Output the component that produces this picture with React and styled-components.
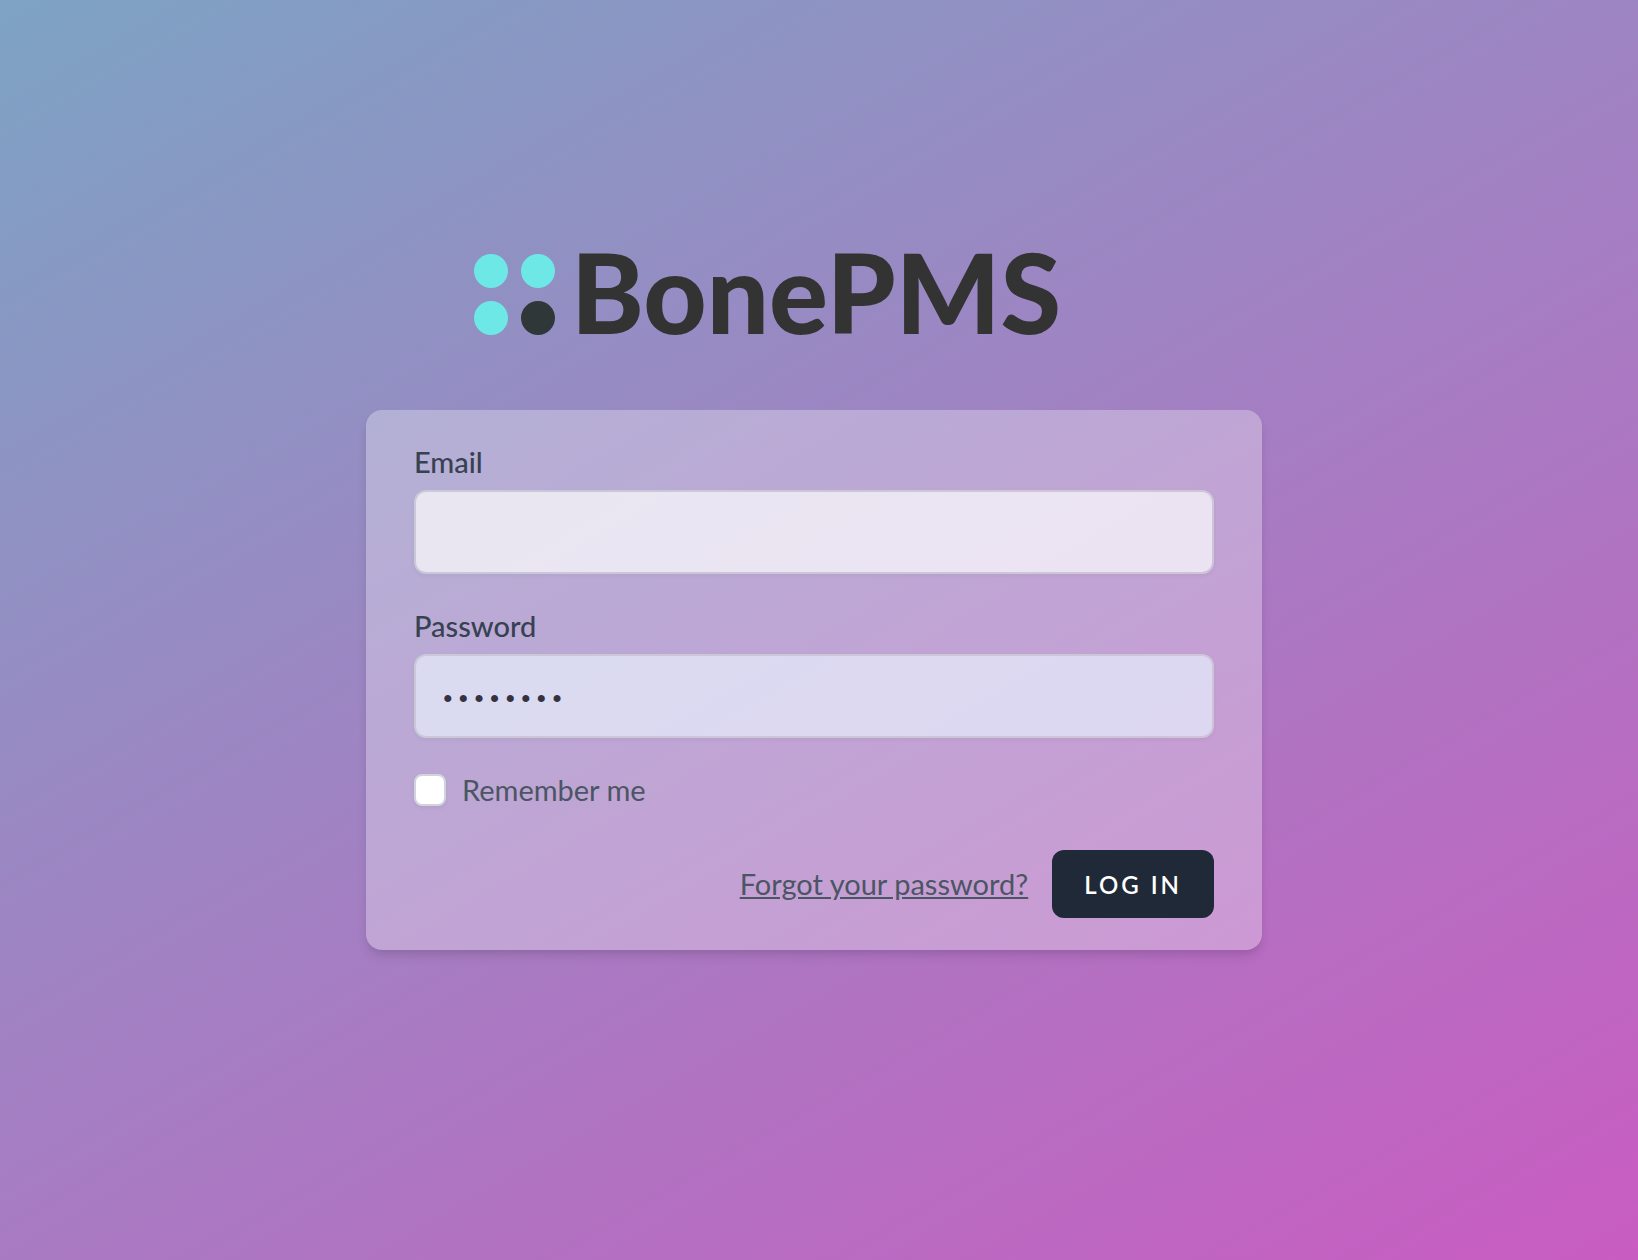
import React, { useState } from 'react';
import styled, { createGlobalStyle } from 'styled-components';

const GlobalStyle = createGlobalStyle`
    *,
    *::before,
    *::after {
        box-sizing: border-box;
    }

    body {
        margin: 0;
        font-family: Lato, 'Liberation Sans', sans-serif;
    }
`;

const Page = styled.main`
    display: flex;
    flex-direction: column;
    align-items: center;
    justify-content: center;
    gap: 60px;
    min-height: 100vh;
    padding: 0 26px 72px 16px;
    background: linear-gradient(150deg, #7da3c4, #c95cc1);
`;

const Brand = styled.a`
    display: flex;
    align-items: center;
    gap: 16px;
    width: 100%;
    max-width: 680px;
    color: #333333;
    text-decoration: none;
`;

const BrandMark = styled.svg`
    flex: none;
    width: 81px;
    height: 81px;
`;

const BrandName = styled.span`
    padding-bottom: 6px;
    font-size: 110px;
    font-weight: 900;
    line-height: 106px;
`;

const Card = styled.form`
    display: flex;
    flex-direction: column;
    width: 100%;
    max-width: 896px;
    padding: 32px 48px;
    border-radius: 16px;
    background: rgba(255, 255, 255, 0.3);
    box-shadow: 0 8px 12px -2px rgba(0, 0, 0, 0.1), 0 4px 8px -4px rgba(0, 0, 0, 0.1);
`;

const Field = styled.div`
    display: flex;
    flex-direction: column;
    gap: 8px;
    margin-bottom: 32px;
`;

const Label = styled.label`
    color: #374151;
    font-size: 29px;
    font-weight: 500;
    line-height: 40px;
`;

const TextInput = styled.input`
    width: 100%;
    height: 84px;
    padding: 16px 24px;
    border: 2px solid #d1d5db;
    border-radius: 12px;
    background: ${({ $filled }) => ($filled ? '#e8f0fe' : '#ffffff')};
    box-shadow: 0 2px 4px rgba(0, 0, 0, 0.05);
    color: #000000;
    font-family: inherit;
    font-size: 29px;
    opacity: 0.7;
    outline: none;

    &[type='password'] {
        padding-top: 24px;
        font-family: 'Liberation Mono', monospace;
        font-size: 26px;
    }
`;

const Remember = styled.label`
    display: flex;
    align-items: center;
    align-self: flex-start;
    gap: 16px;
    color: #4b5563;
    font-size: 29px;
    line-height: 40px;
`;

const Checkbox = styled.input`
    appearance: none;
    width: 32px;
    height: 32px;
    margin: 0;
    border: 2px solid #d1d5db;
    border-radius: 8px;
    background: #ffffff;
    box-shadow: 0 2px 4px rgba(0, 0, 0, 0.05);

    &:checked {
        background: #4f46e5;
    }
`;

const Actions = styled.div`
    display: flex;
    align-items: center;
    justify-content: flex-end;
    gap: 24px;
    margin-top: 40px;
`;

const ForgotLink = styled.a`
    color: #4b5563;
    font-size: 29px;
    line-height: 40px;
    text-decoration: underline;
`;

const LoginButton = styled.button`
    height: 68px;
    padding: 0 32px;
    border: 0;
    border-radius: 12px;
    background: #1f2937;
    color: #ffffff;
    font-family: inherit;
    font-size: 24px;
    font-weight: 600;
    letter-spacing: 3px;
    text-transform: uppercase;
    cursor: pointer;
`;

const Logo = () => (
    <Brand href="/">
        <BrandMark viewBox="0 0 81 81" aria-hidden="true">
            <circle cx="17" cy="17" r="17" fill="#6ee7e7" />
            <circle cx="64" cy="17" r="17" fill="#6ee7e7" />
            <circle cx="17" cy="64" r="17" fill="#6ee7e7" />
            <circle cx="64" cy="64" r="17" fill="#2f3739" />
        </BrandMark>
        <BrandName>BonePMS</BrandName>
    </Brand>
);

const App = () => {
    const [email, setEmail] = useState('');
    const [password, setPassword] = useState('password');
    const [remember, setRemember] = useState(false);

    return (
        <>
            <GlobalStyle />
            <Page>
                <Logo />
                <Card onSubmit={(e) => e.preventDefault()}>
                    <Field>
                        <Label htmlFor="email">Email</Label>
                        <TextInput
                            id="email"
                            type="email"
                            value={email}
                            onChange={(e) => setEmail(e.target.value)}
                        />
                    </Field>
                    <Field>
                        <Label htmlFor="password">Password</Label>
                        <TextInput
                            id="password"
                            type="password"
                            $filled={password !== ''}
                            value={password}
                            onChange={(e) => setPassword(e.target.value)}
                        />
                    </Field>
                    <Remember htmlFor="remember">
                        <Checkbox
                            id="remember"
                            type="checkbox"
                            checked={remember}
                            onChange={(e) => setRemember(e.target.checked)}
                        />
                        Remember me
                    </Remember>
                    <Actions>
                        <ForgotLink href="/forgot-password">Forgot your password?</ForgotLink>
                        <LoginButton type="submit">Log in</LoginButton>
                    </Actions>
                </Card>
            </Page>
        </>
    );
};

export default App;
